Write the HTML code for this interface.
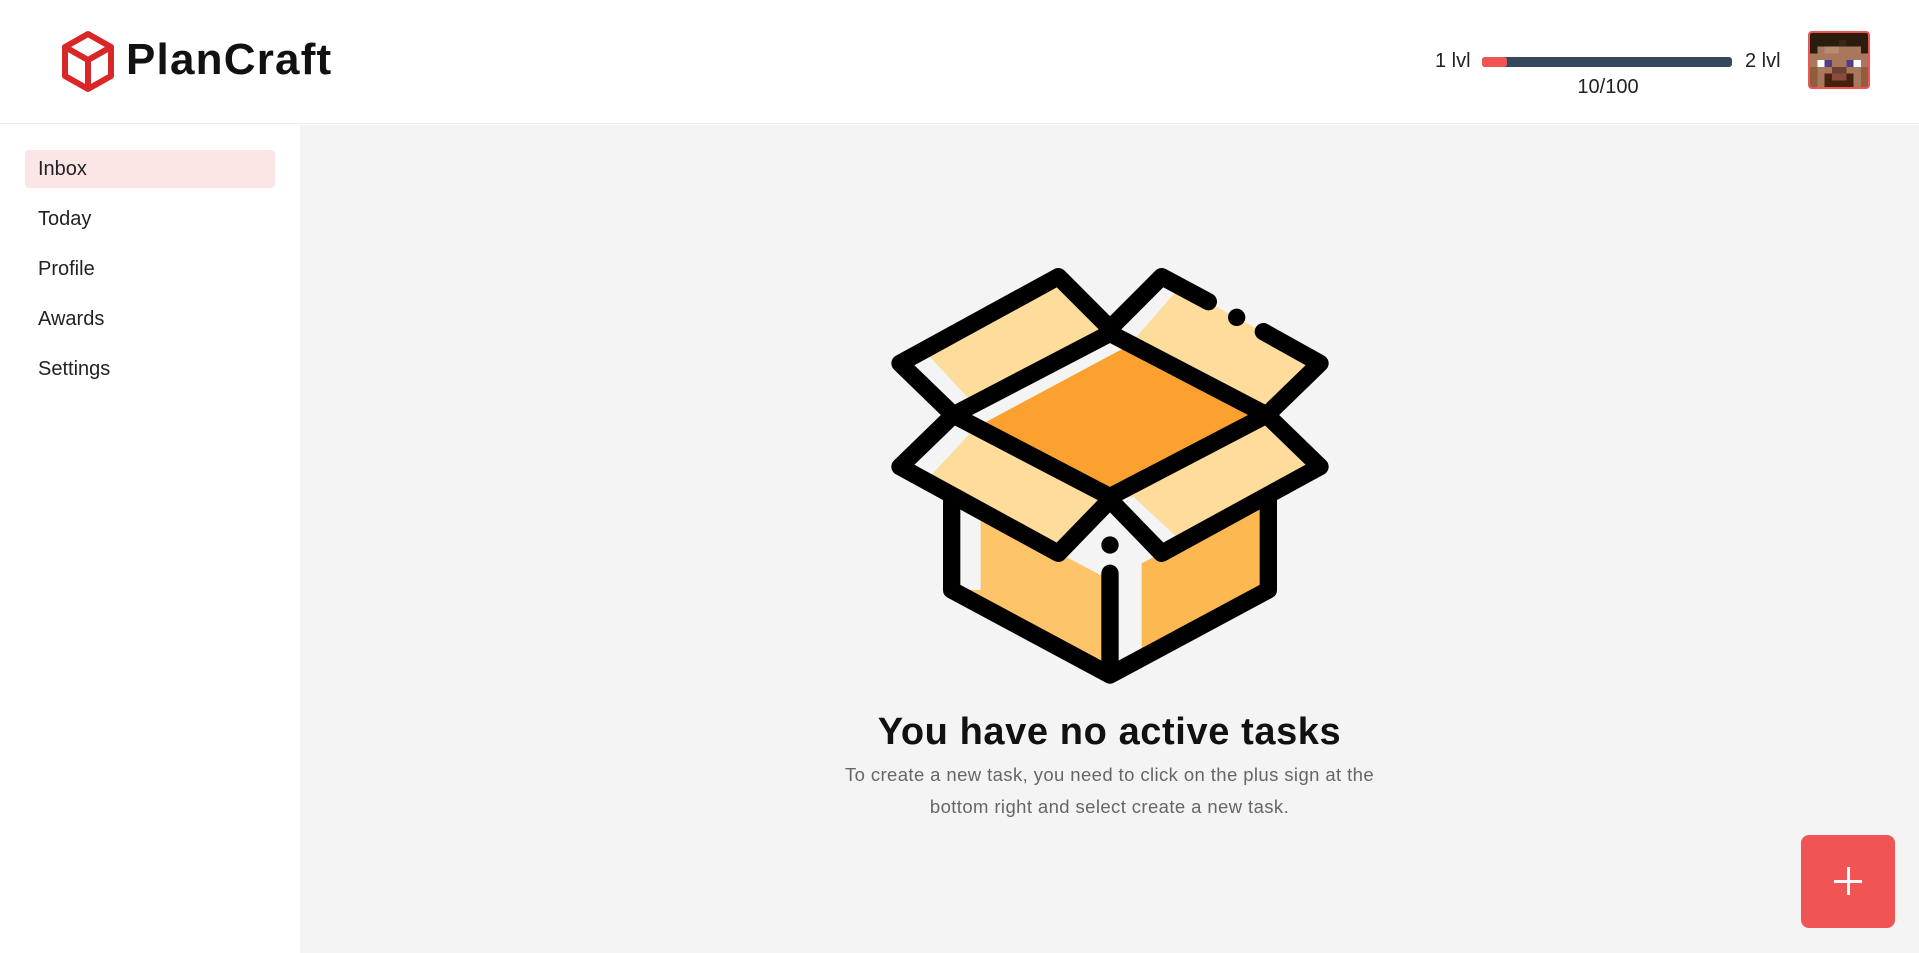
<!DOCTYPE html>
<html><head><meta charset="utf-8"><style>
*{margin:0;padding:0;box-sizing:border-box}
html,body{width:1919px;height:953px;overflow:hidden;background:#fff;font-family:"Liberation Sans",sans-serif;color:#111}
.header{position:absolute;left:0;top:0;width:1919px;height:124px;background:#fff;border-bottom:1px solid #ececec}
.logo{position:absolute;left:60px;top:30px}
.brand{position:absolute;left:126px;top:35px;font-size:44px;font-weight:bold;letter-spacing:1.2px;color:#111}
.lvl{position:absolute;font-size:20px;color:#222;top:50px}
.bar{position:absolute;left:1482px;top:57px;width:250px;height:10px;border-radius:3px;background:#34495e}
.bar i{position:absolute;left:0;top:0;width:25px;height:10px;border-radius:3px;background:#f05454}
.prog{position:absolute;left:1558px;top:76px;width:100px;text-align:center;font-size:20px;color:#222}
.avatar{position:absolute;left:1808px;top:31px;width:62px;height:58px;border:2px solid #f05454;border-radius:4px;overflow:hidden}
.side{position:absolute;left:0;top:125px;width:300px;height:828px;background:#fff}
.item{position:absolute;left:25px;width:250px;height:38px;line-height:38px;padding-left:13px;font-size:20px;color:#222;border-radius:4px}
.item.act{background:#fce5e5}
.main{position:absolute;left:300px;top:125px;width:1619px;height:828px;background:#f4f4f4}
.title{position:absolute;left:300px;top:711px;width:1619px;text-align:center;font-size:38px;font-weight:bold;color:#111;letter-spacing:0.6px}
.sub{position:absolute;left:300px;top:759px;width:1619px;text-align:center;font-size:18.5px;line-height:32px;color:#666;letter-spacing:0.4px}
.fab{position:absolute;left:1801px;top:835px;width:94px;height:93px;background:#f05454;border-radius:8px}
.fab:before{content:"";position:absolute;left:33px;top:45px;width:28px;height:3px;background:#fff}
.fab:after{content:"";position:absolute;left:46px;top:32px;width:3px;height:28px;background:#fff}
</style></head><body>
<div class="header">
<svg class="logo" width="56" height="64" viewBox="0 0 56 64"><g fill="none" stroke="#d92727" stroke-width="6" stroke-linejoin="round"><path d="M28 4 L51 17 L51 46 L28 59 L5 46 L5 17 Z"/><path d="M5 17 L28 30 L51 17 M28 30 L28 59"/></g></svg>
<div class="brand">PlanCraft</div>
<div class="lvl" style="left:1435px">1 lvl</div>
<div class="bar"><i></i></div>
<div class="lvl" style="left:1745px">2 lvl</div>
<div class="prog">10/100</div>
<div class="avatar"><svg width="58" height="54" viewBox="0 0 8 8" preserveAspectRatio="none" shape-rendering="crispEdges">
<rect width="8" height="8" fill="#2b1d0e"/>
<rect x="0" y="2" width="8" height="6" fill="#a9785c"/>
<rect x="0" y="2" width="1" height="1" fill="#2b1d0e"/><rect x="7" y="2" width="1" height="1" fill="#2b1d0e"/>
<rect x="2" y="2" width="2" height="1" fill="#b88a70"/><rect x="4" y="1" width="1" height="1" fill="#3a2612"/>
<rect x="1" y="4" width="1" height="1" fill="#fff"/><rect x="2" y="4" width="1" height="1" fill="#523d89"/>
<rect x="5" y="4" width="1" height="1" fill="#523d89"/><rect x="6" y="4" width="1" height="1" fill="#fff"/>
<rect x="3" y="5" width="2" height="1" fill="#6a4030"/>
<rect x="0" y="5" width="1" height="3" fill="#8f5e3e"/><rect x="7" y="5" width="1" height="3" fill="#8f5e3e"/>
<rect x="2" y="6" width="4" height="2" fill="#45220e"/><rect x="3" y="6" width="2" height="1" fill="#8c4a3a"/>
</svg></div>
</div>
<div class="side">
<div class="item act" style="top:25px">Inbox</div>
<div class="item" style="top:75px">Today</div>
<div class="item" style="top:125px">Profile</div>
<div class="item" style="top:175px">Awards</div>
<div class="item" style="top:225px">Settings</div>
</div>
<div class="main"></div>
<svg style="position:absolute;left:860px;top:250px" width="480" height="450" viewBox="0 0 1440 1350">
<polygon points="275,740 750,990 750,1275 275,1020" fill="#fec46a"/>
<polygon points="750,990 1225,740 1225,1020 750,1275" fill="#fdb851"/>
<rect x="300" y="760" width="62" height="260" fill="#f4f4f4"/>
<polygon points="750,780 845,780 845,1200 750,1250" fill="#f4f4f4"/>
<polygon points="280,495 750,250 1220,495 750,740" fill="#fca12f"/>
<polygon points="280,495 750,250 800,290 370,520" fill="#f4f4f4"/>
<polygon points="120,340 595,80 750,235 280,490" fill="#fddc9c"/>
<polygon points="120,340 200,310 330,450 280,490" fill="#f4f4f4"/>
<polygon points="750,235 905,80 1380,340 1220,490" fill="#fddc9c"/>
<polygon points="750,235 905,80 960,110 830,260" fill="#f4f4f4"/>
<polygon points="280,495 120,650 595,910 750,750" fill="#fddc9c"/>
<polygon points="280,495 120,650 200,690 330,550" fill="#f4f4f4"/>
<polygon points="1220,495 1380,650 905,910 750,750" fill="#fddc9c"/>
<polygon points="750,750 820,740 960,870 905,910" fill="#f4f4f4"/>
<g fill="none" stroke="#000" stroke-width="52" stroke-linecap="round" stroke-linejoin="round">
<polygon points="280,495 750,250 1220,495 750,740"/>
<polyline points="280,495 120,340 595,80 750,235"/>
<polyline points="750,235 905,80 1045,155"/>
<polyline points="1210,245 1380,340 1220,495"/>
<polyline points="280,495 120,650 595,910 750,750 905,910 1380,650 1220,495"/>
<polyline points="275,745 275,1020 750,1275 1225,1020 1225,745"/>
<line x1="750" y1="970" x2="750" y2="1270"/>
</g>
<circle cx="1130" cy="202" r="26"/>
<circle cx="750" cy="885" r="26"/>
</svg>
<div class="title">You have no active tasks</div>
<div class="sub">To create a new task, you need to click on the plus sign at the<br>bottom right and select create a new task.</div>
<div class="fab"></div>
</body></html>
